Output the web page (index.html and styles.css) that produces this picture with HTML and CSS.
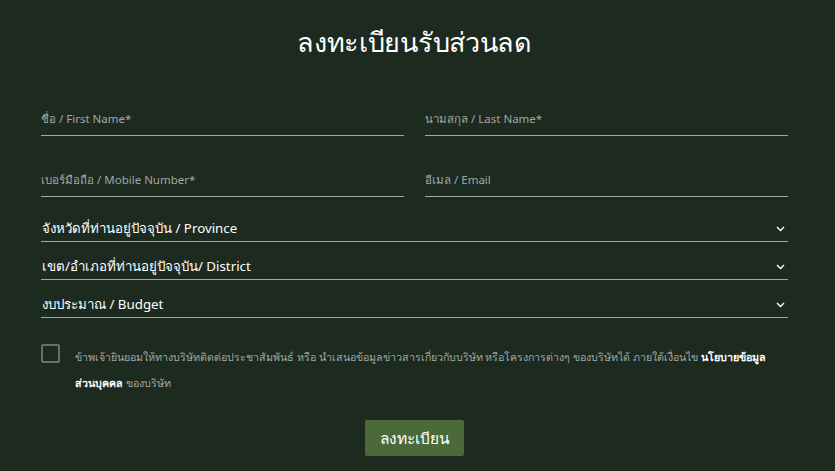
FILE: index.html
```html
<!DOCTYPE html>
<html lang="th">
<head>
    <meta charset="UTF-8">
    <title>ลงทะเบียนรับส่วนลด</title>
    <link rel="stylesheet" href="styles.css">
</head>
<body>

<div class="register">
    <h1 class="title">ลงทะเบียนรับส่วนลด</h1>

    <form class="reg-form" onsubmit="return false">
        <div class="row">
            <input class="field" type="text" placeholder="ชื่อ / First Name*">
            <input class="field" type="text" placeholder="นามสกุล / Last Name*">
        </div>
        <div class="row row-last">
            <input class="field" type="text" placeholder="เบอร์มือถือ / Mobile Number*">
            <input class="field" type="text" placeholder="อีเมล / Email">
        </div>

        <div class="select">
            <span>จังหวัดที่ท่านอยู่ปัจจุบัน / Province</span>
            <svg class="chev" width="9" height="6" viewBox="0 0 9 6"><path d="M1 1l3.5 3.5L8 1" fill="none" stroke="#fff" stroke-width="1.4"/></svg>
        </div>
        <div class="select">
            <span>เขต/อำเภอที่ท่านอยู่ปัจจุบัน/ District</span>
            <svg class="chev" width="9" height="6" viewBox="0 0 9 6"><path d="M1 1l3.5 3.5L8 1" fill="none" stroke="#fff" stroke-width="1.4"/></svg>
        </div>
        <div class="select">
            <span>งบประมาณ / Budget</span>
            <svg class="chev" width="9" height="6" viewBox="0 0 9 6"><path d="M1 1l3.5 3.5L8 1" fill="none" stroke="#fff" stroke-width="1.4"/></svg>
        </div>

        <label class="consent">
            <span class="box"></span>
            <span class="consent-text">ข้าพเจ้ายินยอมให้ทางบริษัทติดต่อประชาสัมพันธ์ หรือ นำเสนอข้อมูลข่าวสารเกี่ยวกับบริษัท หรือโครงการต่างๆ ของบริษัทได้ ภายใต้เงื่อนไข <b><span class="nw">นโยบายข้อมูล</span><wbr><span class="nw">ส่วนบุคคล</span></b> ของบริษัท</span>
        </label>

        <div class="actions">
            <button class="btn" type="submit">ลงทะเบียน</button>
        </div>
    </form>
</div>

</body>
</html>
```

FILE: styles.css
```css
body {
    margin: 0;
    background-color: #1c2a1f;
    font-family: "Noto Sans", "DejaVu Sans", sans-serif;
    color: #fff;
}

.register {
    width: 747px;
    margin-left: 41px;
    padding-top: 22px;
}

.title {
    margin: 0;
    text-align: center;
    font-size: 27px;
    font-weight: 400;
    line-height: 40px;
    letter-spacing: -0.3px;
}

.reg-form {
    margin-top: 34px;
}

.row {
    display: flex;
    gap: 21px;
    margin-bottom: 21px;
}

.row-last {
    margin-bottom: 8px;
}

.field {
    flex: 1;
    min-width: 0;
    height: 40px;
    padding: 6px 0 0;
    background: transparent;
    border: none;
    border-bottom: 1px solid #a3a6a3;
    color: #fff;
    font-family: inherit;
    font-size: 11.5px;
    box-sizing: border-box;
    outline: none;
}

.field::placeholder {
    color: #a3a7a3;
}

.select {
    display: flex;
    justify-content: space-between;
    align-items: center;
    height: 37px;
    padding: 11px 3px 0 0;
    box-sizing: border-box;
    border-bottom: 1px solid #a3a6a3;
    font-size: 13.3px;
    margin-top: 1px;
}

.select span {
    padding-left: 1px;
}

.consent {
    display: flex;
    align-items: flex-start;
    gap: 15px;
    margin-top: 26px;
}

.box {
    flex: none;
    width: 15px;
    height: 15px;
    border: 2px solid #6b6f6b;
    border-radius: 2px;
}

.consent-text {
    font-size: 10.7px;
    line-height: 26px;
    color: #a3a7a3;
    margin-top: 0;
}

.consent-text b {
    color: #fff;
}

.nw {
    white-space: nowrap;
}

.actions {
    text-align: center;
    margin-top: 24px;
}

.btn {
    width: 99px;
    height: 36px;
    border: none;
    border-radius: 2px;
    background-color: #4a6a3a;
    color: #fff;
    font-family: inherit;
    font-size: 15.5px;
    cursor: pointer;
}
```
